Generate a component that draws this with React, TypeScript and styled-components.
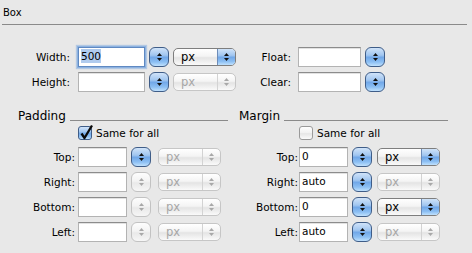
import React from 'react';
import styled, { createGlobalStyle, css } from 'styled-components';

const Global = createGlobalStyle`
  html, body { margin: 0; padding: 0; background: #e8e8e8; }
  body { font-family: "DejaVu Sans", "Liberation Sans", sans-serif; }
`;

const Panel = styled.div`
  width: 472px;
  height: 253px;
  background: #e8e8e8;
  overflow: hidden;
  font-size: 10.5px;
  color: #000;
`;

const Header = styled.div`
  box-sizing: border-box;
  height: 25px;
  margin: 0 5px 0 2px;
  padding: 7px 0 0 1px;
  line-height: 12px;
  font-size: 10px;
  border-bottom: 1px solid #8a8a8a;
`;

const SizeGrid = styled.div`
  margin-top: 22px;
  display: flex;
  flex-direction: column;
  gap: 5px;
`;

const Row = styled.div`
  display: flex;
  align-items: center;
  gap: 4px;
  height: 20px;
`;

const Label = styled.label<{ $w: number; $gap: number }>`
  width: ${(p) => p.$w}px;
  margin-right: ${(p) => p.$gap}px;
  text-align: right;
  white-space: nowrap;
  line-height: 14px;
`;

const TextField = styled.div<{ $w: number; $focused?: boolean }>`
  box-sizing: border-box;
  width: ${(p) => p.$w}px;
  height: 20px;
  padding: 1px 2px 0;
  background: #fff;
  line-height: 15px;
  border: 1px solid #b3b3b3;
  border-top-color: #8c8c8c;
  box-shadow: inset 0 1px 0 #e2e2e2;
  ${(p) =>
    p.$focused &&
    css`
      border-color: #5f89c2;
      box-shadow: 0 0 0 1px #8db2e0, 0 0 1px 2px rgba(141, 178, 224, 0.6);
    `}
`;

const Selected = styled.span`
  background: #b0cbee;
  padding: 1px 0;
`;

const blueGel = css`
  background: linear-gradient(#d0e3f9 0%, #a1c6f0 40%, #72a8e8 52%, #8cbff3 78%, #c0e1fd 100%);
`;
const grayGel = css`
  background: linear-gradient(#fdfdfd 0%, #f3f3f3 45%, #e9e9e9 55%, #f6f6f6 100%);
`;

const Stepper = styled.div<{ $on?: boolean }>`
  box-sizing: border-box;
  width: 20px;
  height: 20px;
  border-radius: 6px;
  display: flex;
  align-items: center;
  justify-content: center;
  ${(p) =>
    p.$on
      ? css`
          border: 1px solid #3f5d88;
          ${blueGel}
        `
      : css`
          border: 1px solid #c2c2c2;
          ${grayGel}
        `}
`;

const Popup = styled.div<{ $on?: boolean; $ml: number }>`
  box-sizing: border-box;
  width: 63px;
  height: 18px;
  margin-left: ${(p) => p.$ml}px;
  border-radius: 5px;
  display: flex;
  overflow: hidden;
  border: 1px solid ${(p) => (p.$on ? '#7e7e7e' : '#c6c6c6')};
  background: linear-gradient(#ffffff 0%, #f4f4f4 45%, #e4e4e4 55%, #fafafa 100%);
`;

const PopupText = styled.span<{ $on?: boolean }>`
  flex: 1;
  padding-left: 7px;
  line-height: 16px;
  font-size: 11.5px;
  color: ${(p) => (p.$on ? '#000' : '#a6a6a6')};
`;

const PopupArrows = styled.span<{ $on?: boolean }>`
  width: 17px;
  display: flex;
  align-items: center;
  justify-content: center;
  ${(p) =>
    p.$on
      ? css`
          border-left: 1px solid #6d8cb8;
          ${blueGel}
        `
      : css`
          border-left: 1px solid #d3d3d3;
        `}
`;

const Sections = styled.div`
  margin-top: 17px;
  display: flex;
`;

const Section = styled.section`
  width: 236px;
  display: flex;
  flex-direction: column;
`;

const SectionTitle = styled.div<{ $indent: number; $end: number }>`
  display: flex;
  align-items: flex-end;
  height: 14px;
  padding-left: ${(p) => p.$indent}px;
  padding-right: ${(p) => p.$end}px;
  font-size: 12px;
  line-height: 14px;
`;

const Rule = styled.div`
  flex: 1;
  height: 1px;
  margin: 0 0 2px 4px;
  background: #8a8a8a;
`;

const CheckRow = styled.label<{ $indent: number }>`
  margin-top: 3px;
  height: 14px;
  display: flex;
  align-items: center;
  gap: 4px;
  padding-left: ${(p) => p.$indent}px;
  line-height: 14px;
`;

const Box = styled.span<{ $on?: boolean }>`
  position: relative;
  box-sizing: border-box;
  width: 14px;
  height: 14px;
  border-radius: 3px;
  ${(p) =>
    p.$on
      ? css`
          border: 1px solid #3f5d88;
          ${blueGel}
        `
      : css`
          border: 1px solid #9a9a9a;
          background: linear-gradient(#ffffff, #f1f1f1 50%, #e6e6e6 55%, #fbfbfb);
        `}
`;

const Tick = styled.svg`
  position: absolute;
  left: 0px;
  top: -3px;
`;

const Fields = styled.div`
  margin-top: 7px;
  display: flex;
  flex-direction: column;
  gap: 5px;
`;

const Arrows = ({ color }: { color: string }) => (
  <svg width="7" height="10" viewBox="0 0 7 10">
    <polygon points="1,4 6,4 3.5,1" fill={color} />
    <polygon points="1,6 6,6 3.5,9" fill={color} />
  </svg>
);

const Step = ({ on }: { on?: boolean }) => (
  <Stepper $on={on}>
    <Arrows color={on ? '#111' : '#a8a8a8'} />
  </Stepper>
);

const Select = ({ on, ml }: { on?: boolean; ml: number }) => (
  <Popup $on={on} $ml={ml}>
    <PopupText $on={on}>px</PopupText>
    <PopupArrows $on={on}>
      <Arrows color={on ? '#111' : '#a8a8a8'} />
    </PopupArrows>
  </Popup>
);

const Checkbox = ({ on }: { on?: boolean }) => (
  <Box $on={on}>
    {on && (
      <Tick width="15" height="17" viewBox="0 0 15 17">
        <polyline
          points="2.5,9.5 5.5,14 13,1.5"
          fill="none"
          stroke="#0a0a0a"
          strokeWidth="2.3"
          strokeLinejoin="round"
        />
      </Tick>
    )}
  </Box>
);

type Side = { label: string; value: string; step: boolean; unit: boolean };

const padding: Side[] = [
  { label: 'Top:', value: '', step: true, unit: false },
  { label: 'Right:', value: '', step: false, unit: false },
  { label: 'Bottom:', value: '', step: false, unit: false },
  { label: 'Left:', value: '', step: false, unit: false },
];

const margin: Side[] = [
  { label: 'Top:', value: '0', step: true, unit: true },
  { label: 'Right:', value: 'auto', step: true, unit: false },
  { label: 'Bottom:', value: '0', step: true, unit: true },
  { label: 'Left:', value: 'auto', step: true, unit: false },
];

export default function App() {
  return (
    <>
      <Global />
      <Panel>
        <Header>Box</Header>
        <SizeGrid>
          <Row>
            <Label $w={70} $gap={4}>Width:</Label>
            <TextField $w={67} $focused>
              <Selected>500</Selected>
            </TextField>
            <Step on />
            <Select on ml={0} />
            <Label $w={51} $gap={3}>Float:</Label>
            <TextField $w={63} />
            <Step on />
          </Row>
          <Row>
            <Label $w={70} $gap={4}>Height:</Label>
            <TextField $w={67} />
            <Step on />
            <Select ml={0} />
            <Label $w={51} $gap={3}>Clear:</Label>
            <TextField $w={63} />
            <Step on />
          </Row>
        </SizeGrid>
        <Sections>
          <Section>
            <SectionTitle $indent={18} $end={8}>
              Padding
              <Rule />
            </SectionTitle>
            <CheckRow $indent={78}>
              <Checkbox on />
              Same for all
            </CheckRow>
            <Fields>
              {padding.map((s) => (
                <Row key={s.label}>
                  <Label $w={75} $gap={-1}>{s.label}</Label>
                  <TextField $w={49}>{s.value}</TextField>
                  <Step on={s.step} />
                  <Select on={s.unit} ml={3} />
                </Row>
              ))}
            </Fields>
          </Section>
          <Section>
            <SectionTitle $indent={3} $end={24}>
              Margin
              <Rule />
            </SectionTitle>
            <CheckRow $indent={63}>
              <Checkbox />
              Same for all
            </CheckRow>
            <Fields>
              {margin.map((s) => (
                <Row key={s.label}>
                  <Label $w={62} $gap={-3}>{s.label}</Label>
                  <TextField $w={49}>{s.value}</TextField>
                  <Step on={s.step} />
                  <Select on={s.unit} ml={1} />
                </Row>
              ))}
            </Fields>
          </Section>
        </Sections>
      </Panel>
    </>
  );
}
